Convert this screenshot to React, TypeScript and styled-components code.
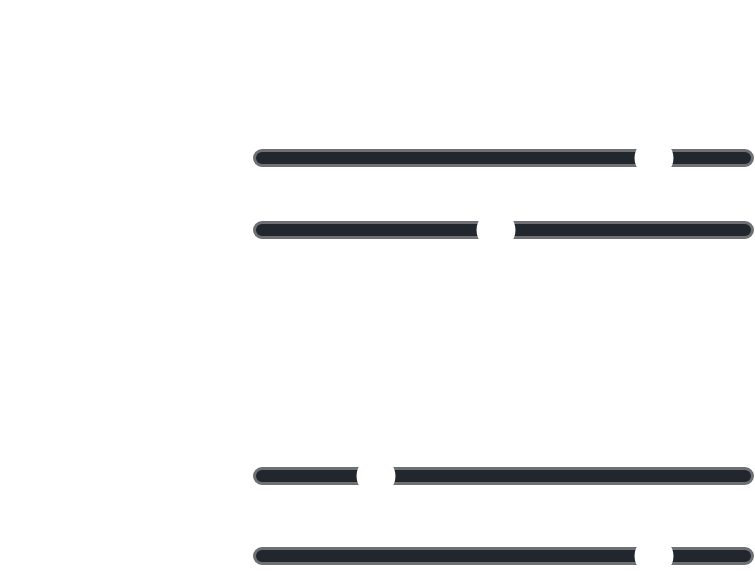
import React from 'react'
import styled, { createGlobalStyle } from 'styled-components'

const GlobalStyle = createGlobalStyle`
  html, body {
    margin: 0;
    padding: 0;
    background: #ffffff;
    font-family: "Liberation Sans", Arial, sans-serif;
  }
`

const Page = styled.div`
  width: 755px;
  height: 576px;
  overflow: hidden;
  box-sizing: border-box;
  padding-top: 138px;
  display: flex;
  flex-direction: column;
  gap: 206px;
`

const Group = styled.div<{ $gap: number }>`
  display: flex;
  flex-direction: column;
  gap: ${(p) => p.$gap}px;
`

const Row = styled.div`
  display: grid;
  grid-template-columns: 253px 501px;
  align-items: center;
  height: 40px;
`

const Label = styled.span`
  font-size: 14px;
  color: #ffffff;
`

const Track = styled.div`
  position: relative;
  height: 18px;
  box-sizing: border-box;
  border: 3px solid #6f7073;
  border-radius: 9px;
  background: #22272d;
`

// thumb sits over the track
const Thumb = styled.div`
  position: absolute;
  top: 50%;
  width: 39px;
  height: 39px;
  border-radius: 50%;
  background: #ffffff;
  transform: translate(-50%, -50%);
`

interface SliderProps {
  label: string
  value: number
}

const Slider: React.FC<SliderProps> = ({ label, value }) => (
  <Row>
    <Label>{label}</Label>
    <Track role="slider" aria-valuenow={value} aria-label={label}>
      <Thumb style={{ left: `${value}%` }} />
    </Track>
  </Row>
)

const App: React.FC = () => {
  return (
    <>
      <GlobalStyle />
      <Page>
        <Group $gap={32}>
          <Slider label="" value={80.4} />
          <Slider label="" value={48.4} />
        </Group>
        <Group $gap={40}>
          <Slider label="" value={24.2} />
          <Slider label="" value={80.4} />
        </Group>
      </Page>
    </>
  )
}

export default App
